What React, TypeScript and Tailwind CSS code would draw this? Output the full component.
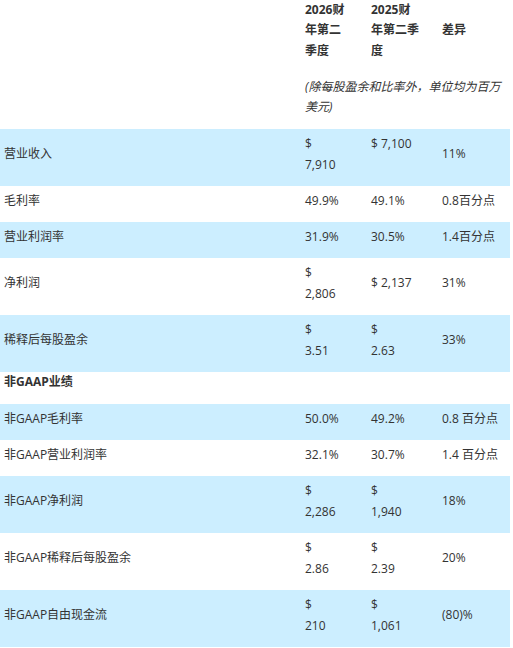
type Row = {
  label: string;
  a?: string[];
  b?: string[];
  c?: string[];
  h: string;
  blue?: boolean;
  section?: boolean;
};

const rows: Row[] = [
  { label: "营业收入", a: ["$", "7,910"], b: ["$ 7,100", "\u00a0"], c: ["11%"], h: "h-[57px]", blue: true },
  { label: "毛利率", a: ["49.9%"], b: ["49.1%"], c: ["0.8百分点"], h: "h-[36px]" },
  { label: "营业利润率", a: ["31.9%"], b: ["30.5%"], c: ["1.4百分点"], h: "h-[36px]", blue: true },
  { label: "净利润", a: ["$", "2,806"], b: ["$ 2,137"], c: ["31%"], h: "h-[57px]" },
  { label: "稀释后每股盈余", a: ["$", "3.51"], b: ["$", "2.63"], c: ["33%"], h: "h-[57px]", blue: true },
  { label: "非GAAP业绩", h: "h-[32px]", section: true },
  { label: "非GAAP毛利率", a: ["50.0%"], b: ["49.2%"], c: ["0.8 百分点"], h: "h-[36px]", blue: true },
  { label: "非GAAP营业利润率", a: ["32.1%"], b: ["30.7%"], c: ["1.4 百分点"], h: "h-[36px]" },
  { label: "非GAAP净利润", a: ["$", "2,286"], b: ["$", "1,940"], c: ["18%"], h: "h-[57px]", blue: true },
  { label: "非GAAP稀释后每股盈余", a: ["$", "2.86"], b: ["$", "2.39"], c: ["20%"], h: "h-[57px]" },
  { label: "非GAAP自由现金流", a: ["$", "210"], b: ["$", "1,061"], c: ["(80)%"], h: "h-[57px]", blue: true },
];

const Cell = ({ lines, w }: { lines: string[]; w: string }) => (
  <div className={`${w} flex flex-col justify-center pl-[4px] pt-[5px] pb-[11px]`}>
    {lines.map((l, i) => (
      <span key={i} className="whitespace-nowrap">
        {l}
      </span>
    ))}
  </div>
);

export default function App() {
  return (
    <div
      className="w-[510px] bg-white text-[12px] leading-[1.7] text-[#333333]"
      style={{ fontFamily: '"Open Sans", "Noto Sans CJK SC", sans-serif' }}
    >
      {/* header */}
      <div className="flex h-[63px] font-bold">
        <div className="w-[301px]" />
        <div className="w-[66px] pl-[4px]">
          <div>2026财</div>
          <div>年第二</div>
          <div>季度</div>
        </div>
        <div className="w-[71px] pl-[4px]">
          <div>2025财</div>
          <div>年第二季</div>
          <div>度</div>
        </div>
        <div className="w-[72px] pl-[4px] flex items-center pb-[3px]">差异</div>
      </div>
      <div className="flex h-[66px] pt-[14px]">
        <div className="w-[301px]" />
        <div className="w-[209px] pl-[4px] italic">(除每股盈余和比率外，单位均为百万美元)</div>
      </div>

      {rows.map((r, i) =>
        r.section ? (
          <div key={i} className={`${r.h} flex pl-[4px] font-bold`}>
            {r.label}
          </div>
        ) : (
          <div key={i} className={`${r.h} flex ${r.blue ? "bg-[#cceeff]" : "bg-white"}`}>
            <Cell lines={[r.label]} w="w-[301px]" />
            <Cell lines={r.a!} w="w-[66px]" />
            <Cell lines={r.b!} w="w-[71px]" />
            <Cell lines={r.c!} w="w-[72px]" />
          </div>
        )
      )}
    </div>
  );
}
